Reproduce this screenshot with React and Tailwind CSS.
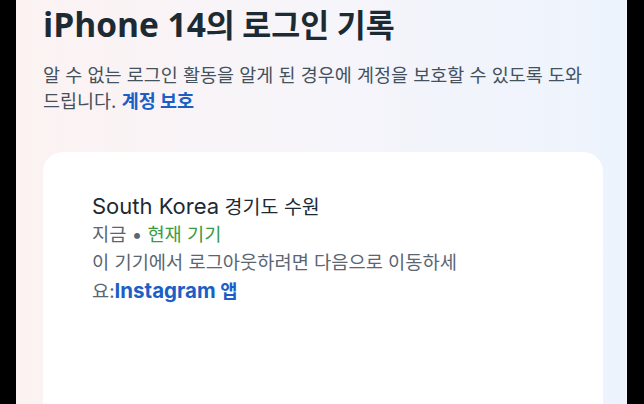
export default function App() {
  return (
    <div className="w-[644px] h-[404px] bg-black overflow-hidden flex font-['Inter','Noto_Sans_CJK_KR',sans-serif]">
      <div className="ml-[16px] w-[611px] h-full bg-gradient-to-r from-[#fcf2f2] via-[#f6f5fa] to-[#edf3fd] border-r border-[#f4f7fc] flex flex-col pl-[27px] pt-[4px]">
        <h1 className="text-[31.5px] leading-[40px] font-bold text-[#1c2b33] whitespace-nowrap">
          <span className="text-[33.5px] font-['Open_Sans']">iPhone 14</span>의 로그인 기록
        </h1>
        <p className="mt-[16px] text-[18.5px] leading-[26px] text-[#44525e] whitespace-nowrap">
          알 수 없는 로그인 활동을 알게 된 경우에 계정을 보호할 수 있도록 도와
          <br />
          드립니다. <span className="font-bold text-[#1b5fc6]">계정 보호</span>
        </p>
        <div className="mt-[38px] w-[560px] h-[300px] bg-white rounded-[20px] pl-[49px] pt-[40px] shrink-0">
          <div className="text-[19.5px] leading-[28px] text-[#1c2b33] whitespace-nowrap">
            <span className="text-[22px] font-['Inter']">South Korea</span> 경기도 수원
          </div>
          <div className="text-[18.7px] leading-[28px] text-[#5a6671] whitespace-nowrap">
            지금 • <span className="text-[#3a9b45]">현재 기기</span>
          </div>
          <div className="text-[18.7px] leading-[28px] text-[#5a6671] whitespace-nowrap">
            이 기기에서 로그아웃하려면 다음으로 이동하세
            <br />
            요:<span className="font-bold text-[#1b5fc6]"><span className="text-[20.5px] font-['Inter']">Instagram</span> 앱</span>
          </div>
        </div>
      </div>
    </div>
  );
}
